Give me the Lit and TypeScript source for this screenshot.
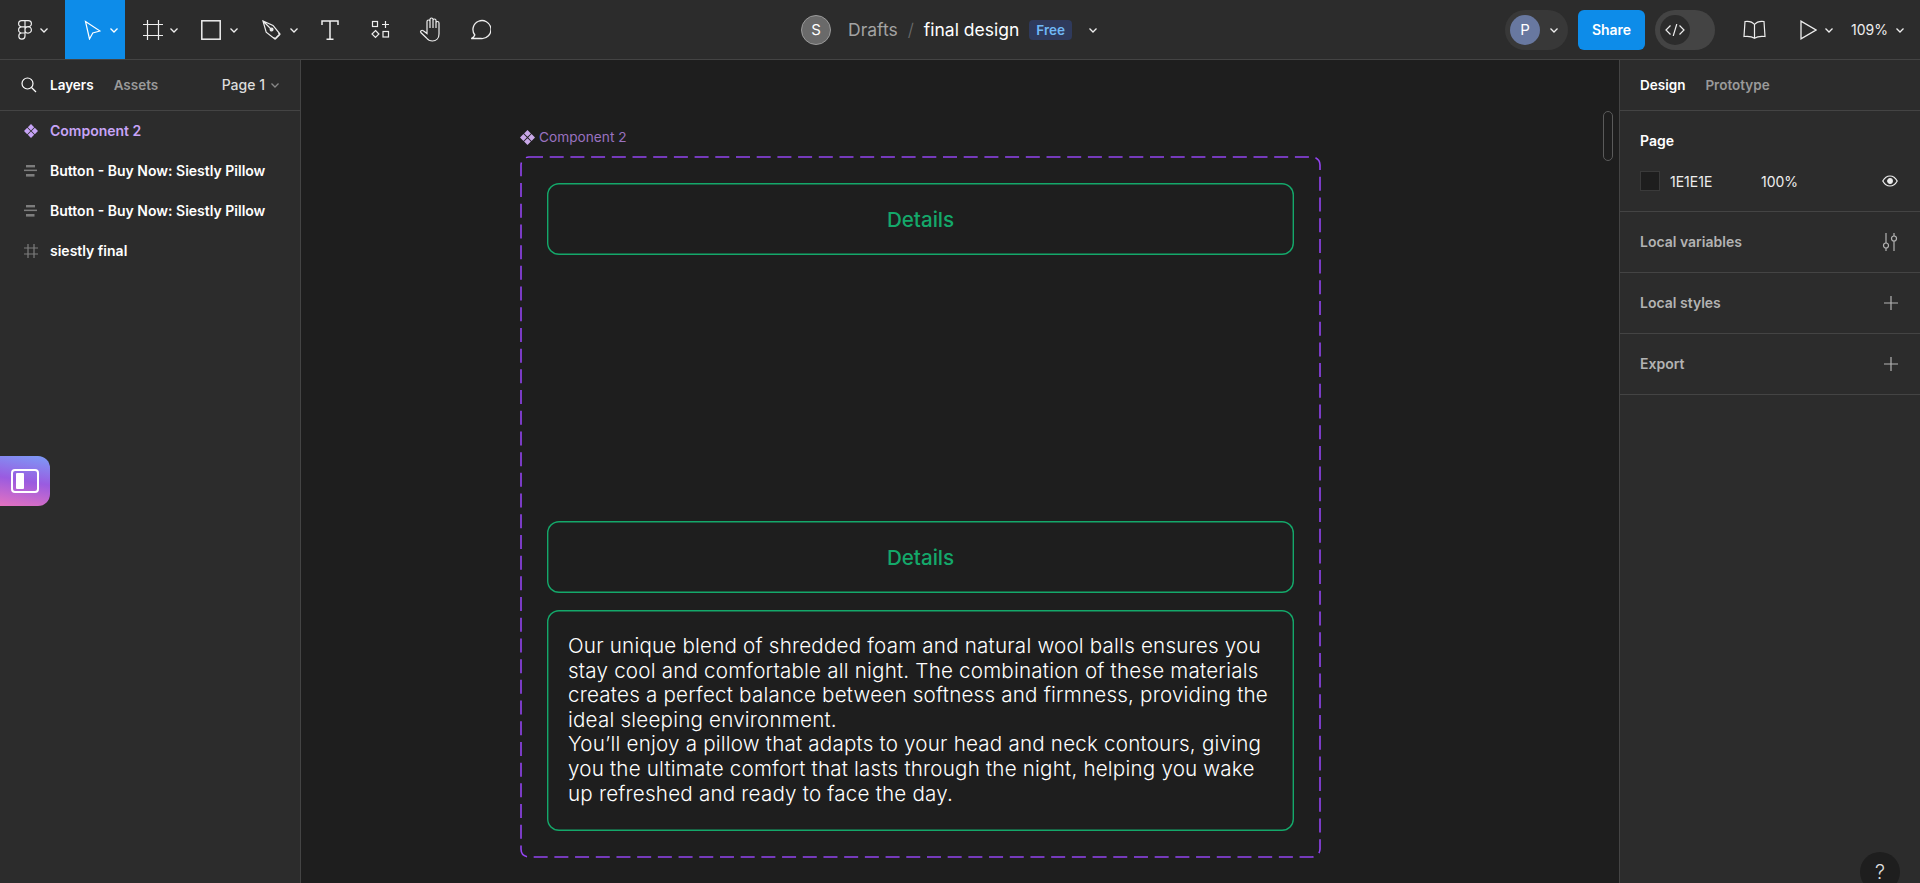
import { LitElement, html, css, svg } from 'lit';
import { customElement } from 'lit/decorators.js';

const chevron = (size = 12) => html`<svg class="chev" width=${size} height=${size} viewBox="0 0 12 12" fill="none" stroke="currentColor" stroke-width="1.3"><path d="M2.5 4.5 6 8l3.5-3.5"/></svg>`;

const icon = (w: number, h: number, body: unknown) => html`<svg width=${w} height=${h} viewBox="0 0 ${w} ${h}" fill="none" stroke="currentColor" stroke-width="1.2">${body}</svg>`;

const compGlyph = (color: string, size: number) => html`<svg width=${size} height=${size} viewBox="0 0 14 14" fill=${color}><path d="M7 0l3.200 3.200L7 6.400 3.800 3.200zM7 7.600l3.200 3.200L7 14l-3.200-3.200zM3.200 3.800 6.400 7l-3.200 3.200L0 7zM10.800 3.800 14 7l-3.200 3.200L7.600 7z"/></svg>`;

const autoLayout = html`<svg width="13" height="12" viewBox="0 0 13 12" fill="#7d7d7d"><rect x="2" y="0" width="9" height="2.400"/><rect x="0" y="4.600" width="13" height="1.500"/><rect x="2" y="9" width="8.500" height="2.600"/></svg>`;

const plus = icon(14, 14, svg`<path d="M7 0v14M0 7h14"/>`);

@customElement('app-root')
export class AppRoot extends LitElement {
  static styles = css`
    :host {
      display: block;
      height: 100vh;
      overflow: hidden;
      background: #1e1e1e;
      font-family: Inter, 'Liberation Sans', sans-serif;
      color: #fff;
    }
    * { box-sizing: border-box; }
    svg { display: block; flex: none; }

    .topbar {
      display: grid;
      grid-template-columns: 801px 1fr auto;
      height: 60px;
      background: #2c2c2c;
      border-bottom: 1px solid #444;
    }
    .tools { display: flex; height: 59px; }
    .tool {
      display: flex;
      align-items: center;
      width: 60px;
      padding-left: 18px;
      gap: 7px;
      color: #eee;
    }
    .tool.logo { width: 65px; padding-left: 18px; gap: 6px; }
    .tool.move { padding-left: 19px; background: #0d8ce9; color: #fff; }
    .tool.frame-tool { width: 58px; gap: 5px; }
    .tool.rect { width: 62px; }
    .tool.pen { padding-left: 17px; }
    .tool.narrow { width: 50px; justify-content: center; padding-left: 0; }

    .crumbs { display: flex; align-items: center; font-size: 17.5px; height: 59px; }
    .avatar {
      display: flex;
      align-items: center;
      justify-content: center;
      width: 30px;
      height: 30px;
      border-radius: 50%;
      font-size: 15px;
      color: #fff;
    }
    .avatar.s { background: #6a6a6a; border: 1px solid #9a9a9a; margin-right: 17px; }
    .avatar.p { background: #6878a0; }
    .drafts { color: #a3a3a3; }
    .slash { color: #6c6c6c; margin: 0 10px; font-weight: 300; }
    .badge {
      background: #2f3a5c;
      color: #6fb8f5;
      font-size: 13.5px;
      font-weight: 600;
      padding: 0 7px;
      height: 20px;
      line-height: 20px;
      border-radius: 4px;
      margin: 0 15px 0 10px;
    }
    .crumbs .chev { color: #eee; }

    .actions { display: flex; align-items: center; height: 59px; padding-right: 14px; color: #eee; }
    .user-pill {
      display: flex;
      align-items: center;
      gap: 8px;
      width: 63px;
      height: 40px;
      padding-left: 5px;
      border-radius: 20px;
      background: #383838;
    }
    .share {
      width: 67px;
      height: 40px;
      margin: 0 10px;
      border-radius: 6px;
      background: #0d8ce9;
      color: #fff;
      font-size: 14px;
      font-weight: 600;
      text-align: center;
      line-height: 40px;
    }
    .dev-toggle {
      display: flex;
      align-items: center;
      width: 60px;
      height: 40px;
      padding-left: 5px;
      border-radius: 20px;
      background: #444;
    }
    .dev-knob {
      display: flex;
      align-items: center;
      justify-content: center;
      width: 30px;
      height: 30px;
      border-radius: 50%;
      background: #2c2c2c;
    }
    .book { margin: 0 34px 0 28px; }
    .play { display: flex; align-items: center; gap: 6px; margin-right: 16px; }
    .zoom { display: flex; align-items: center; gap: 6px; font-size: 14px; }

    .body { display: grid; grid-template-columns: 301px 1fr 301px; height: 823px; }
    .panel { background: #2c2c2c; position: relative; font-size: 14px; font-weight: 600; }
    .panel.left { border-right: 1px solid #444; }
    .panel.right { border-left: 1px solid #444; }

    .tabs {
      display: flex;
      align-items: center;
      height: 51px;
      border-bottom: 1px solid #444;
    }
    .left .tabs { padding: 0 19px 0 21px; }
    .right .tabs { padding: 0 20px; gap: 20px; }
    .tab { font-size: 13.5px; }
    .tab.dim { color: #9a9a9a; }
    .left .tab:first-of-type { margin: 0 20px 0 13px; }
    .page {
      margin-left: auto;
      display: flex;
      align-items: center;
      gap: 4px;
      color: #ddd;
      font-weight: 500;
      font-size: 14px;
      padding-bottom: 1px;
    }
    .page .chev { color: #888; }

    .layer {
      display: flex;
      align-items: center;
      height: 40px;
      padding: 0 0 1px 24px;
      gap: 13px;
    }
    .layer-icon { width: 13px; display: flex; justify-content: center; }
    .layer.comp { color: #c7a4f7; }
    .layer.plain .layer-icon { color: #7d7d7d; }

    .section {
      display: flex;
      align-items: center;
      justify-content: space-between;
      height: 61px;
      padding: 0 22px 1px 20px;
      border-bottom: 1px solid #444;
      color: #b3b3b3;
    }
    .section svg { color: #b3b3b3; }
    .page-section {
      height: 101px;
      padding: 21px 20px 0;
      border-bottom: 1px solid #444;
    }
    .page-fill {
      display: flex;
      align-items: center;
      margin-top: 22px;
      font-weight: 400;
      color: #eee;
    }
    .swatch {
      width: 20px;
      height: 20px;
      background: #1e1e1e;
      border: 1px solid #3a3a3a;
      margin-right: 10px;
    }
    .fill-hex { width: 91px; }
    .page-fill svg { margin-left: auto; margin-right: 2px; }

    .canvas { position: relative; background: #1e1e1e; }
    .frame-label {
      position: absolute;
      left: 219px;
      top: 69px;
      display: flex;
      align-items: center;
      gap: 4px;
      font-size: 13.7px;
      color: #9a72c0;
    }
    .frame {
      position: absolute;
      left: 219px;
      top: 96px;
      width: 801px;
      height: 702px;
      padding: 27px;
      display: flex;
      flex-direction: column;
      gap: 17px;
    }
    .frame-outline { position: absolute; inset: 0; }
    .btn {
      height: 72px;
      flex: none;
      display: flex;
      align-items: center;
      justify-content: center;
      box-shadow: inset 0 0 0 1.4px #14a86a;
      border-radius: 12px;
      color: #14a86a;
      font-size: 20.6px;
      font-weight: 450;
      padding-top: 1px;
    }
    .spacer { flex: 1; }
    .copy {
      height: 221px;
      flex: none;
      padding: 24px 19px 24px 21px;
      box-shadow: inset 0 0 0 1.4px #14a86a;
      border-radius: 12px;
      font-size: 20.6px;
      font-weight: 360;
      line-height: 24.6px;
      letter-spacing: 0.2px;
      color: #fff;
    }
    .copy p { margin: 0; }
    .scroll-thumb {
      position: absolute;
      right: 6px;
      top: 51px;
      width: 10px;
      height: 50px;
      border: 1.5px solid #5a5a5a;
      border-radius: 5px;
    }
    .widget {
      position: absolute;
      left: 0;
      top: 396px;
      width: 50px;
      height: 50px;
      border-radius: 0 12px 12px 0;
      background: linear-gradient(190deg, #7c9cf7 0%, #9a5be0 50%, #e472c0 100%);
      display: flex;
      align-items: center;
      justify-content: center;
    }
    .help {
      position: absolute;
      left: 240px;
      top: 792px;
      width: 40px;
      height: 40px;
      padding-top: 9px;
      border-radius: 50%;
      background: #1e1e1e;
      color: #ddd;
      font-size: 20px;
      font-weight: 300;
      text-align: center;
      line-height: 22px;
    }
  `;

  private renderTools() {
    return html`
      <div class="tools">
        <div class="tool logo">
          ${icon(14, 20, svg`<path d="M7 .6H3.700a3.100 3.100 0 0 0 0 6.200H7zM7 .6h3.300a3.100 3.100 0 0 1 0 6.200H7zM7 6.800H3.700a3.100 3.100 0 0 0 0 6.200H7zM7 13H3.700a3.100 3.100 0 1 0 3.300 3.100zM13.400 9.900a3.200 3.200 0 1 1-6.400 0 3.200 3.200 0 0 1 6.400 0z"/>`)}
          ${chevron()}
        </div>
        <div class="tool move">
          ${icon(17, 20, svg`<path d="M1.500 1.500 16 11l-7.200 2-3.300 6z" stroke-linejoin="miter"/>`)}
          ${chevron()}
        </div>
        <div class="tool frame-tool">
          ${icon(20, 20, svg`<path d="M4.500 0v20M15.500 0v20M0 4.500h20M0 15.500h20"/>`)}
          ${chevron()}
        </div>
        <div class="tool rect">
          ${icon(20, 20, svg`<rect x=".8" y=".8" width="18.400" height="18.400" stroke-width="1.500"/>`)}
          ${chevron()}
        </div>
        <div class="tool pen">
          ${icon(19, 20, svg`<path d="M1 1l3.200 11.200 8.600 6.800 5-5.200-6.800-8.400zM1 1l8 8M11.600 17.400l1.900 1.600 4.400-4.600-1.600-1.600"/><circle cx="9.600" cy="9.600" r="1.400" fill="currentColor"/>`)}
          ${chevron()}
        </div>
        <div class="tool narrow">
          ${icon(18, 20, svg`<path d="M1 5V1h16v4M9 1v18M5.500 19.200h7" stroke-width="1.500"/>`)}
        </div>
        <div class="tool narrow">
          ${icon(19, 19, svg`<rect x="1.500" y="1.500" width="5" height="5"/><path d="M14.500 1v7M11 4.500h7"/><path d="M4.500 10.500l3.400 3.500-3.400 3.500L1 14z"/><rect x="12" y="11.500" width="5.500" height="5.500"/>`)}
        </div>
        <div class="tool narrow">
          ${icon(23, 25, svg`<path d="M8 12V4.500a1.500 1.500 0 0 1 3 0V11M11 11V2.500a1.500 1.500 0 0 1 3 0V11M14 11V3.500a1.500 1.500 0 0 1 3 0V11M17 11V6a1.500 1.500 0 0 1 3 0v11c0 4.500-3 7-6.500 7-3 0-4.500-1-6-3L1.800 15.500c-1-1.300 1-3 2.500-1.800L8 16.500V12"/>`)}
        </div>
        <div class="tool narrow">
          ${icon(21, 21, svg`<path d="M4.800 16A9 9 0 1 1 11 19.500H1.200c1.700-.6 3.100-1.900 3.600-3.500z" stroke-width="1.300"/>`)}
        </div>
      </div>
    `;
  }

  private renderActions() {
    return html`
      <div class="actions">
        <div class="user-pill"><div class="avatar p">P</div>${chevron()}</div>
        <div class="share">Share</div>
        <div class="dev-toggle">
          <div class="dev-knob">
            ${icon(20, 12, svg`<path d="M5.500 1.500 1 6l4.500 4.500M14.500 1.500 19 6l-4.500 4.500M11.800 0 8.200 12"/>`)}
          </div>
        </div>
        <div class="book">
          ${icon(23, 19, svg`<path d="M11.500 4.500C9.500 2 6 1 2 1.500L1 16.500c4-.5 8 0 10.500 1.800 2.500-1.800 6.500-2.300 10.500-1.800l-1-15c-4-.5-7.500.5-9.500 3zM11.500 4.500v13.800" stroke-width="1.200"/>`)}
        </div>
        <div class="play">
          ${icon(17, 20, svg`<path d="M1 1.200v17.600L16 10z" stroke-width="1.300"/>`)}
          ${chevron()}
        </div>
        <div class="zoom">109%${chevron()}</div>
      </div>
    `;
  }

  render() {
    return html`
      <div class="topbar">
        ${this.renderTools()}
        <div class="crumbs">
          <div class="avatar s">S</div>
          <span class="drafts">Drafts</span>
          <span class="slash">/</span>
          <span>final design</span>
          <span class="badge">Free</span>
          ${chevron()}
        </div>
        ${this.renderActions()}
      </div>

      <div class="body">
        <aside class="panel left">
          <div class="tabs">
            ${icon(16, 16, svg`<circle cx="6.500" cy="6.500" r="5.500"/><path d="M10.500 10.500 15 15"/>`)}
            <span class="tab">Layers</span>
            <span class="tab dim">Assets</span>
            <span class="page">Page 1 ${chevron()}</span>
          </div>
          <div class="layer comp"><span class="layer-icon">${compGlyph('#c7a4f7', 14)}</span>Component 2</div>
          <div class="layer plain"><span class="layer-icon">${autoLayout}</span>Button - Buy Now: Siestly Pillow</div>
          <div class="layer plain"><span class="layer-icon">${autoLayout}</span>Button - Buy Now: Siestly Pillow</div>
          <div class="layer plain">
            <span class="layer-icon">${icon(14, 14, svg`<path d="M4 0v14M10 0v14M0 4h14M0 10h14"/>`)}</span>siestly final
          </div>
          <div class="widget">
            <svg width="30" height="24" viewBox="0 0 30 24" fill="none">
              <rect x="2" y="1" width="26" height="22" rx="3" stroke="#fff" stroke-width="2"/>
              <rect x="6" y="4" width="8" height="16" rx="1" fill="#fff"/>
            </svg>
          </div>
        </aside>

        <main class="canvas">
          <div class="frame-label">${compGlyph('#c9a8e8', 15)} Component 2</div>
          <div class="frame">
            <svg class="frame-outline" width="801" height="702" fill="none">
              <rect x="1" y="1" width="799" height="700" rx="8" stroke="#9344f0" stroke-width="1.600" stroke-dasharray="14 6.700"/>
            </svg>
            <div class="btn">Details</div>
            <div class="spacer"></div>
            <div class="btn">Details</div>
            <div class="copy">
              <p>Our unique blend of shredded foam and natural wool balls ensures you stay cool and comfortable all night. The combination of these materials creates a perfect balance between softness and firmness, providing the ideal sleeping environment.</p>
              <p>You’ll enjoy a pillow that adapts to your head and neck contours, giving you the ultimate comfort that lasts through the night, helping you wake up refreshed and ready to face the day.</p>
            </div>
          </div>
          <div class="scroll-thumb"></div>
        </main>

        <aside class="panel right">
          <div class="tabs">
            <span class="tab">Design</span>
            <span class="tab dim">Prototype</span>
          </div>
          <div class="page-section">
            <div>Page</div>
            <div class="page-fill">
              <span class="swatch"></span>
              <span class="fill-hex">1E1E1E</span>
              <span>100%</span>
              ${icon(16, 12, svg`<path d="M.8 6c1.800-3.300 4.400-5 7.200-5s5.400 1.700 7.200 5c-1.800 3.300-4.400 5-7.200 5S2.600 9.300.8 6z" stroke-width="1.200"/><circle cx="8" cy="6" r="2.300" fill="currentColor"/>`)}
            </div>
          </div>
          <div class="section">Local variables
            ${icon(16, 18, svg`<path d="M4 0v10M4 15v3M12 0v3M12 8v10"/><circle cx="4" cy="12.500" r="2.500"/><circle cx="12" cy="5.500" r="2.500"/>`)}
          </div>
          <div class="section">Local styles ${plus}</div>
          <div class="section">Export ${plus}</div>
          <div class="help">?</div>
        </aside>
      </div>
    `;
  }
}
